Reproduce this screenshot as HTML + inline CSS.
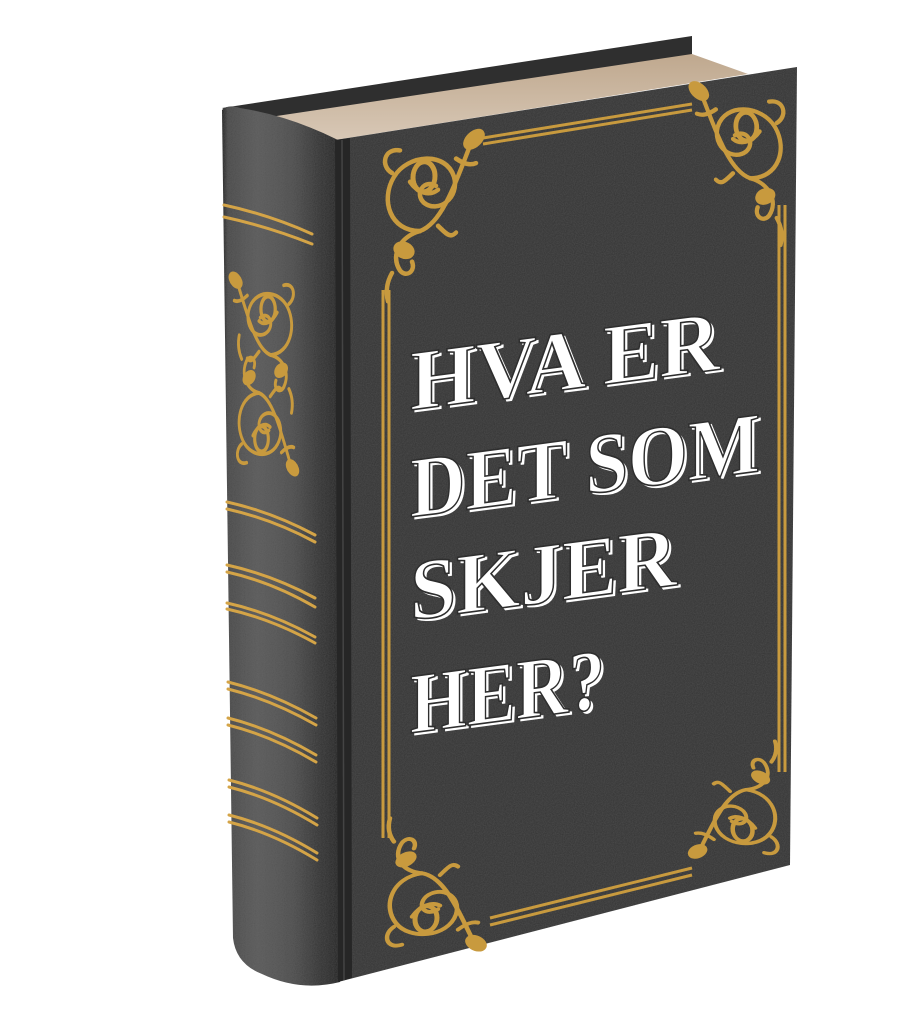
<!DOCTYPE html>
<html><head><meta charset="utf-8"><style>
html,body{margin:0;padding:0;background:#fff;}
svg{display:block;}
</style></head><body>
<svg width="900" height="1029" viewBox="0 0 900 1029" xmlns="http://www.w3.org/2000/svg">
<defs>
<linearGradient id="sp" x1="222" y1="0" x2="340" y2="0" gradientUnits="userSpaceOnUse">
<stop offset="0" stop-color="#222"/><stop offset="0.05" stop-color="#4a4a4a"/>
<stop offset="0.3" stop-color="#5a5a5a"/><stop offset="0.6" stop-color="#4e4e4e"/>
<stop offset="0.85" stop-color="#323232"/><stop offset="1" stop-color="#242424"/>
</linearGradient>
<linearGradient id="pg" x1="0" y1="0" x2="0" y2="1">
<stop offset="0" stop-color="#bfa88e"/><stop offset="1" stop-color="#d8c8b6"/>
</linearGradient>
<filter id="tex" x="0" y="0" width="100%" height="100%">
<feTurbulence type="fractalNoise" baseFrequency="0.9" numOctaves="2" result="n"/>
<feColorMatrix type="matrix" values="0 0 0 0 0.5 0 0 0 0 0.5 0 0 0 0 0.5 0 0 0 0.08 0" in="n" result="m"/>
<feComposite in="m" in2="SourceGraphic" operator="in" result="c"/>
<feMerge><feMergeNode in="SourceGraphic"/><feMergeNode in="c"/></feMerge>
</filter>
<g id="orn" fill="none" stroke="#c89a3e" stroke-width="4.5" stroke-linecap="round">
<path d="M42,100 C12,98 2,66 16,44 C30,22 68,22 76,48 C82,70 60,84 46,72 C36,62 46,48 58,56"/>
<ellipse cx="46" cy="46" rx="11" ry="15" stroke-width="5"/>
<path d="M32,50 C40,62 52,66 60,60" />
<path d="M42,100 C62,94 74,64 92,18"/>
<ellipse cx="96" cy="12" rx="10" ry="6" transform="rotate(-40 96 12)" fill="#c89a3e"/>
<path d="M78,30 C86,36 92,38 98,36"/>
<path d="M14,40 C2,32 6,14 22,18"/>
<path d="M42,100 C22,104 12,122 22,138 C28,146 38,140 34,130"/>
<ellipse cx="26" cy="118" rx="9" ry="6" fill="#c89a3e" transform="rotate(30 26 118)"/>
<path d="M14,140 C8,150 8,160 10,168"/>
<path d="M60,96 C68,104 72,110 78,104"/>
</g>
</defs>

<path d="M222,108 L692,36 L692,56 L250,124 Z" fill="#2f2f2f"/>
<path d="M236,122 L692,54 L748,74 L335,140 Q290,122 236,122 Z" fill="url(#pg)"/>
<path d="M222,110 Q228,104 240,108 Q290,116 338,140 L340,982 Q300,992 262,974 Q236,964 233,938 Z" fill="url(#sp)" filter="url(#tex)"/>
<path d="M335,140 L797,67 L790,865 L338,982 Z" fill="#363636" filter="url(#tex)"/>
<path d="M335,140 L350,138 L352,978 L338,982 Z" fill="#262626"/>
<line x1="342" y1="140" x2="344" y2="980" stroke="#444" stroke-width="1.5"/>

<g stroke="#d4a447" stroke-width="3" fill="none" stroke-linecap="round">
<path d="M224,205 Q270,215 312,234"/><path d="M224,217 Q270,227 312,244"/>
<path d="M227,502 Q272,512 315,535"/><path d="M227,509 Q272,519 315,542"/>
<path d="M227,565 Q272,575 315,598"/><path d="M227,572 Q272,582 315,607"/>
<path d="M227,603 Q272,613 315,637"/><path d="M227,609 Q272,619 315,643"/>
<path d="M228,682 Q272,693 316,718"/><path d="M228,689 Q272,700 316,725"/>
<path d="M228,718 Q272,729 316,755"/><path d="M228,725 Q272,736 316,762"/>
<path d="M229,780 Q273,791 317,818"/><path d="M229,787 Q273,798 317,825"/>
<path d="M229,815 Q273,826 317,853"/><path d="M229,822 Q273,833 317,860"/>
</g>
<use href="#orn" transform="translate(298,270) scale(-0.65,0.85)"/>
<use href="#orn" transform="translate(233,478) scale(0.62,-0.85)"/>

<g stroke="#c89a3e" stroke-width="3" fill="none">
<path d="M483,138 L692,104"/><path d="M483,144 L692,110"/>
<path d="M383,290 L383,838"/><path d="M389,290 L389,838"/>
<path d="M779,205 L779,772"/><path d="M785,205 L785,772"/>
<path d="M490,918 L692,868"/><path d="M490,925 L692,875"/>
</g>
<use href="#orn" transform="translate(378,134) skewY(-4)"/>
<use href="#orn" transform="translate(790,86) scale(-0.95,0.95) skewY(-4)"/>
<use href="#orn" transform="translate(380,962) scale(1,-0.85) skewY(6)"/>
<use href="#orn" transform="translate(784,868) scale(-0.9,-0.75) skewY(6)"/>

<g transform="translate(410,0) skewY(-7.5)" font-family="Liberation Serif, serif" font-weight="bold" font-size="86">
<g fill="#ffffff" transform="translate(3,3)">
<text x="0" y="410" textLength="310" lengthAdjust="spacingAndGlyphs">HVA ER</text>
<text x="0" y="517" textLength="350" lengthAdjust="spacingAndGlyphs">DET SOM</text>
<text x="0" y="620" textLength="267" lengthAdjust="spacingAndGlyphs">SKJER</text>
<text x="0" y="733" textLength="195" lengthAdjust="spacingAndGlyphs">HER?</text>
</g>
<g fill="#ffffff" stroke="#2e2e2e" stroke-width="1.6">
<text x="0" y="410" textLength="310" lengthAdjust="spacingAndGlyphs">HVA ER</text>
<text x="0" y="517" textLength="350" lengthAdjust="spacingAndGlyphs">DET SOM</text>
<text x="0" y="620" textLength="267" lengthAdjust="spacingAndGlyphs">SKJER</text>
<text x="0" y="733" textLength="195" lengthAdjust="spacingAndGlyphs">HER?</text>
</g>
</g>
</svg>
</body></html>
